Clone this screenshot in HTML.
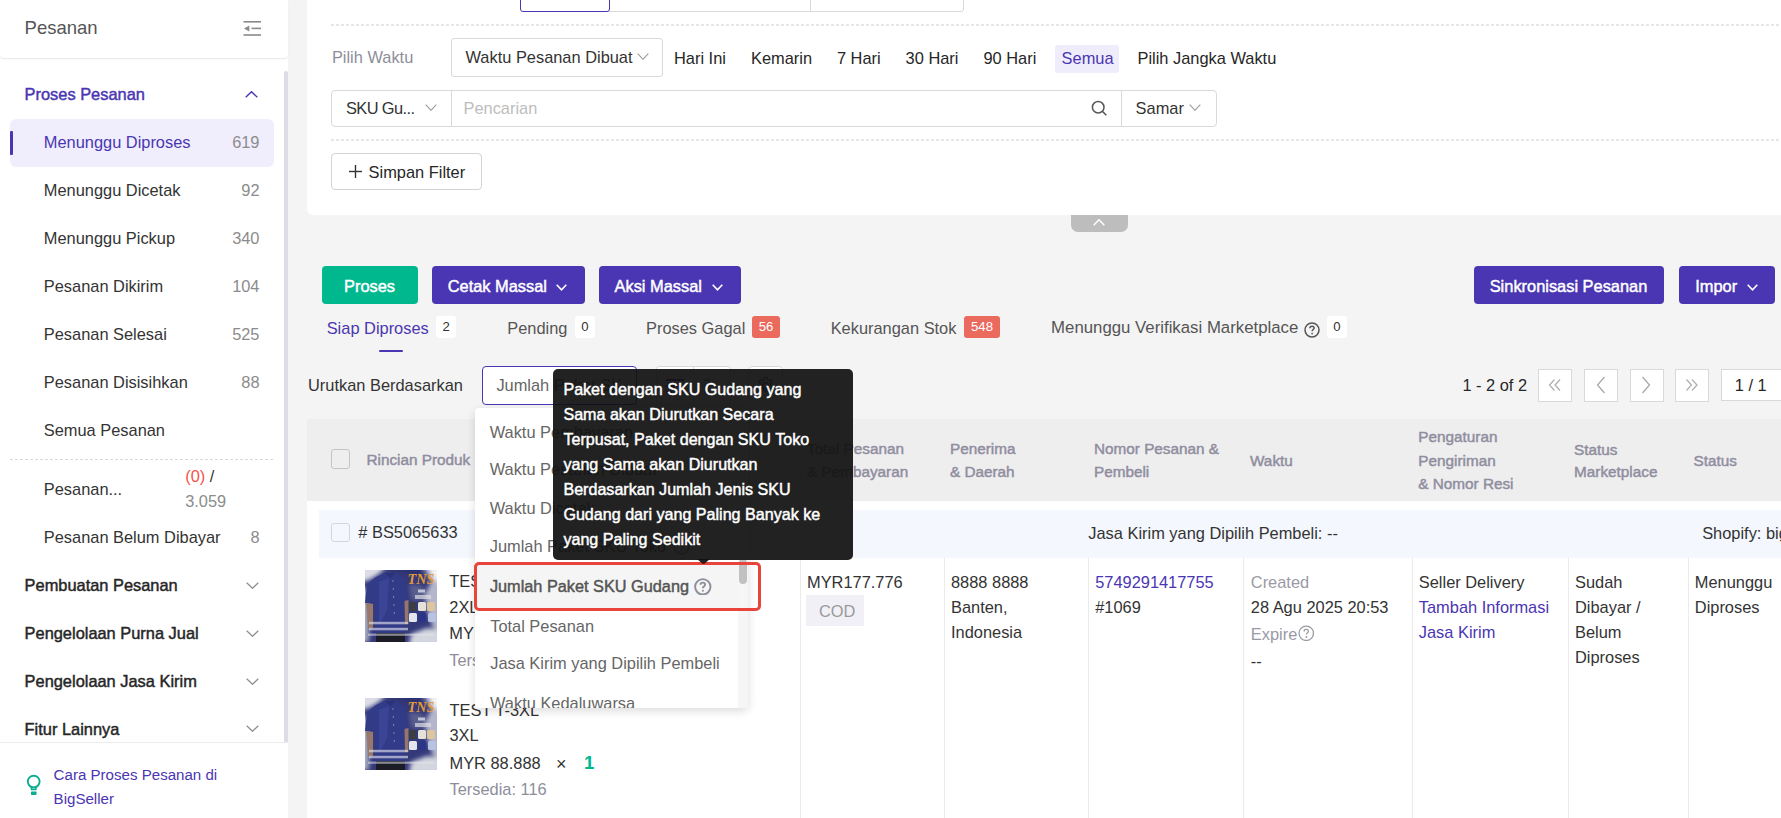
<!DOCTYPE html>
<html><head><meta charset="utf-8"><style>
html,body{margin:0;padding:0;width:1781px;height:818px;overflow:hidden;font-family:"Liberation Sans", sans-serif;}
body{position:relative;}
</style></head><body>
<div style="position:absolute;left:0px;top:0px;width:1781px;height:818px;background:#f4f4f4"></div>
<div style="position:absolute;left:0px;top:0px;width:288px;height:818px;background:#fff"></div>
<div style="position:absolute;left:0px;top:0px;width:288px;height:58px;background:#fff;border-bottom:1px solid #ececec;border-radius:0 0 4px 4px;box-shadow:0 1px 2px rgba(0,0,0,0.03)"></div>
<div style="position:absolute;left:24.6px;top:19.34px;font-size:18.5px;line-height:1;color:#555;font-weight:400;white-space:nowrap;">Pesanan</div>
<svg style="position:absolute;left:243px;top:20px" width="19" height="17" viewBox="0 0 19 17"><rect x="0.5" y="1" width="17.5" height="1.6" fill="#8a8a8a"/><rect x="8.5" y="7.6" width="9.5" height="1.6" fill="#8a8a8a"/><rect x="0.5" y="14.2" width="17.5" height="1.6" fill="#8a8a8a"/><polygon points="1,8.4 6.3,5.4 6.3,11.4" fill="#8a8a8a"/></svg>
<div style="position:absolute;left:284px;top:71px;width:4px;height:671px;background:#dcdde6;border-radius:2px 2px 0 0"></div>
<div style="position:absolute;left:24.6px;top:86.22px;font-size:16.4px;line-height:1;color:#4a36b2;font-weight:400;white-space:nowrap;-webkit-text-stroke:0.45px #4a36b2;">Proses Pesanan</div>
<svg style="position:absolute;left:245px;top:91px" width="13" height="7" viewBox="0 0 13 7"><polyline points="0.7,6.3 6.5,0.7 12.3,6.3" fill="none" stroke="#4a36b2" stroke-width="1.4"/></svg>
<div style="position:absolute;left:10px;top:119px;width:264px;height:48px;background:#f0eefc;border-radius:6px"></div>
<div style="position:absolute;left:10px;top:131px;width:3px;height:24px;background:#4a36b2;border-radius:1px"></div>
<div style="position:absolute;left:43.8px;top:134.12px;font-size:16.4px;line-height:1;color:#4a36b2;font-weight:400;white-space:nowrap;">Menunggu Diproses</div>
<div style="position:absolute;right:1521.5px;top:134.12px;font-size:16.4px;line-height:1;color:#8c8c8c;font-weight:400;white-space:nowrap;">619</div>
<div style="position:absolute;left:43.8px;top:182.12px;font-size:16.4px;line-height:1;color:#333;font-weight:400;white-space:nowrap;">Menunggu Dicetak</div>
<div style="position:absolute;right:1521.5px;top:182.12px;font-size:16.4px;line-height:1;color:#8c8c8c;font-weight:400;white-space:nowrap;">92</div>
<div style="position:absolute;left:43.8px;top:230.12px;font-size:16.4px;line-height:1;color:#333;font-weight:400;white-space:nowrap;">Menunggu Pickup</div>
<div style="position:absolute;right:1521.5px;top:230.12px;font-size:16.4px;line-height:1;color:#8c8c8c;font-weight:400;white-space:nowrap;">340</div>
<div style="position:absolute;left:43.8px;top:278.12px;font-size:16.4px;line-height:1;color:#333;font-weight:400;white-space:nowrap;">Pesanan Dikirim</div>
<div style="position:absolute;right:1521.5px;top:278.12px;font-size:16.4px;line-height:1;color:#8c8c8c;font-weight:400;white-space:nowrap;">104</div>
<div style="position:absolute;left:43.8px;top:326.12px;font-size:16.4px;line-height:1;color:#333;font-weight:400;white-space:nowrap;">Pesanan Selesai</div>
<div style="position:absolute;right:1521.5px;top:326.12px;font-size:16.4px;line-height:1;color:#8c8c8c;font-weight:400;white-space:nowrap;">525</div>
<div style="position:absolute;left:43.8px;top:374.12px;font-size:16.4px;line-height:1;color:#333;font-weight:400;white-space:nowrap;">Pesanan Disisihkan</div>
<div style="position:absolute;right:1521.5px;top:374.12px;font-size:16.4px;line-height:1;color:#8c8c8c;font-weight:400;white-space:nowrap;">88</div>
<div style="position:absolute;left:43.8px;top:422.12px;font-size:16.4px;line-height:1;color:#333;font-weight:400;white-space:nowrap;">Semua Pesanan</div>
<div style="position:absolute;left:10px;top:459px;width:263px;height:0px;border-top:1px dashed #d9d9d9"></div>
<div style="position:absolute;left:43.8px;top:480.82px;font-size:16.4px;line-height:1;color:#333;font-weight:400;white-space:nowrap;">Pesanan...</div>
<div style="position:absolute;left:185.2px;top:467.92px;font-size:16.4px;line-height:1;color:#333;font-weight:400;white-space:nowrap;"><span style="color:#f5524a">(0)</span> /</div>
<div style="position:absolute;left:185.2px;top:492.52px;font-size:16.4px;line-height:1;color:#8c8c8c;font-weight:400;white-space:nowrap;">3.059</div>
<div style="position:absolute;left:43.8px;top:528.52px;font-size:16.4px;line-height:1;color:#333;font-weight:400;white-space:nowrap;">Pesanan Belum Dibayar</div>
<div style="position:absolute;right:1521.5px;top:528.52px;font-size:16.4px;line-height:1;color:#8c8c8c;font-weight:400;white-space:nowrap;">8</div>
<div style="position:absolute;left:24.6px;top:577.02px;font-size:16.4px;line-height:1;color:#262626;font-weight:400;white-space:nowrap;-webkit-text-stroke:0.45px #262626;">Pembuatan Pesanan</div>
<svg style="position:absolute;left:245.5px;top:581.9px" width="13" height="7" viewBox="0 0 13 7"><polyline points="0.7,0.7 6.5,6.3 12.3,0.7" fill="none" stroke="#8c8c8c" stroke-width="1.2"/></svg>
<div style="position:absolute;left:24.6px;top:625.02px;font-size:16.4px;line-height:1;color:#262626;font-weight:400;white-space:nowrap;-webkit-text-stroke:0.45px #262626;">Pengelolaan Purna Jual</div>
<svg style="position:absolute;left:245.5px;top:629.9px" width="13" height="7" viewBox="0 0 13 7"><polyline points="0.7,0.7 6.5,6.3 12.3,0.7" fill="none" stroke="#8c8c8c" stroke-width="1.2"/></svg>
<div style="position:absolute;left:24.6px;top:673.22px;font-size:16.4px;line-height:1;color:#262626;font-weight:400;white-space:nowrap;-webkit-text-stroke:0.45px #262626;">Pengelolaan Jasa Kirim</div>
<svg style="position:absolute;left:245.5px;top:678.1px" width="13" height="7" viewBox="0 0 13 7"><polyline points="0.7,0.7 6.5,6.3 12.3,0.7" fill="none" stroke="#8c8c8c" stroke-width="1.2"/></svg>
<div style="position:absolute;left:24.6px;top:720.52px;font-size:16.4px;line-height:1;color:#262626;font-weight:400;white-space:nowrap;-webkit-text-stroke:0.45px #262626;">Fitur Lainnya</div>
<svg style="position:absolute;left:245.5px;top:725.4px" width="13" height="7" viewBox="0 0 13 7"><polyline points="0.7,0.7 6.5,6.3 12.3,0.7" fill="none" stroke="#8c8c8c" stroke-width="1.2"/></svg>
<div style="position:absolute;left:0px;top:742px;width:288px;height:76px;background:#fff;border-top:1px solid #ececec"></div>
<svg style="position:absolute;left:25px;top:774px" width="17" height="23" viewBox="0 0 17 23"><circle cx="8.7" cy="7.6" r="5.9" fill="none" stroke="#0aae8e" stroke-width="1.9"/><path d="M6.3 12.6 L6.6 15.5 L10.8 15.5 L11.1 12.6" fill="none" stroke="#0aae8e" stroke-width="1.6"/><rect x="6" y="17.6" width="5.5" height="3.3" rx="0.6" fill="#0aae8e"/></svg>
<div style="position:absolute;left:53.6px;top:767.12px;font-size:15.1px;line-height:1;color:#4a36b2;font-weight:400;white-space:nowrap;">Cara Proses Pesanan di</div>
<div style="position:absolute;left:53.6px;top:790.72px;font-size:15.1px;line-height:1;color:#4a36b2;font-weight:400;white-space:nowrap;">BigSeller</div>
<div style="position:absolute;left:307px;top:0px;width:1490px;height:215px;background:#fff;border-radius:0 0 6px 6px"></div>
<div style="position:absolute;left:600px;top:-10px;width:364px;height:22px;border:1px solid #d9d9d9;border-radius:0 0 3px 3px;box-sizing:border-box"></div>
<div style="position:absolute;left:810px;top:-10px;width:1px;height:22px;background:#d9d9d9"></div>
<div style="position:absolute;left:520px;top:-10px;width:90px;height:22px;border:1.5px solid #4a36b2;border-radius:0 0 3px 3px;box-sizing:border-box;background:#fff"></div>
<div style="position:absolute;left:331px;top:24px;width:1450px;height:1.6px;background:repeating-linear-gradient(90deg,#e6e6e6 0 3px,transparent 3px 5px)"></div>
<div style="position:absolute;left:331.9px;top:49.42px;font-size:16.4px;line-height:1;color:#8e8e9a;font-weight:400;white-space:nowrap;">Pilih Waktu</div>
<div style="position:absolute;left:450.5px;top:38.4px;width:212.5px;height:38.5px;border:1px solid #d9d9d9;border-radius:3px;box-sizing:border-box"></div>
<div style="position:absolute;left:465.5px;top:49.42px;font-size:16.4px;line-height:1;color:#333;font-weight:400;white-space:nowrap;">Waktu Pesanan Dibuat</div>
<svg style="position:absolute;left:636.5px;top:53px" width="12" height="7" viewBox="0 0 12 7"><polyline points="0.7,0.7 6.0,6.3 11.3,0.7" fill="none" stroke="#9a9a9a" stroke-width="1.1"/></svg>
<div style="position:absolute;left:674px;top:50.22px;font-size:16.4px;line-height:1;color:#262626;font-weight:400;white-space:nowrap;">Hari Ini</div>
<div style="position:absolute;left:751px;top:50.22px;font-size:16.4px;line-height:1;color:#262626;font-weight:400;white-space:nowrap;">Kemarin</div>
<div style="position:absolute;left:836.9px;top:50.22px;font-size:16.4px;line-height:1;color:#262626;font-weight:400;white-space:nowrap;">7 Hari</div>
<div style="position:absolute;left:905.6px;top:50.22px;font-size:16.4px;line-height:1;color:#262626;font-weight:400;white-space:nowrap;">30 Hari</div>
<div style="position:absolute;left:983.5px;top:50.22px;font-size:16.4px;line-height:1;color:#262626;font-weight:400;white-space:nowrap;">90 Hari</div>
<div style="position:absolute;left:1055px;top:45px;width:64px;height:28px;background:#efecfb;border-radius:3px"></div>
<div style="position:absolute;left:1061.6px;top:50.22px;font-size:16.4px;line-height:1;color:#4a36b2;font-weight:400;white-space:nowrap;">Semua</div>
<div style="position:absolute;left:1137.5px;top:50.22px;font-size:16.4px;line-height:1;color:#262626;font-weight:400;white-space:nowrap;">Pilih Jangka Waktu</div>
<div style="position:absolute;left:331.4px;top:89.5px;width:885.5px;height:37px;border:1px solid #d9d9d9;border-radius:4px;box-sizing:border-box"></div>
<div style="position:absolute;left:450.5px;top:89.5px;width:1px;height:37px;background:#d9d9d9"></div>
<div style="position:absolute;left:1121.3px;top:89.5px;width:1px;height:37px;background:#d9d9d9"></div>
<div style="position:absolute;left:346px;top:100.12px;font-size:16.4px;line-height:1;color:#333;font-weight:400;white-space:nowrap;letter-spacing:-0.6px">SKU Gu...</div>
<svg style="position:absolute;left:424.5px;top:103.5px" width="12" height="7" viewBox="0 0 12 7"><polyline points="0.7,0.7 6.0,6.3 11.3,0.7" fill="none" stroke="#9a9a9a" stroke-width="1.1"/></svg>
<div style="position:absolute;left:463.5px;top:100.12px;font-size:16.4px;line-height:1;color:#bdbdbd;font-weight:400;white-space:nowrap;">Pencarian</div>
<svg style="position:absolute;left:1091px;top:100px" width="17" height="17" viewBox="0 0 17 17"><circle cx="7.2" cy="7.2" r="5.8" fill="none" stroke="#555" stroke-width="1.5"/><line x1="11.3" y1="11.3" x2="15.3" y2="15.3" stroke="#555" stroke-width="1.6"/></svg>
<div style="position:absolute;left:1135.6px;top:100.12px;font-size:16.4px;line-height:1;color:#333;font-weight:400;white-space:nowrap;">Samar</div>
<svg style="position:absolute;left:1189px;top:103.5px" width="12" height="7" viewBox="0 0 12 7"><polyline points="0.7,0.7 6.0,6.3 11.3,0.7" fill="none" stroke="#9a9a9a" stroke-width="1.1"/></svg>
<div style="position:absolute;left:331px;top:139px;width:1450px;height:1.6px;background:repeating-linear-gradient(90deg,#e6e6e6 0 3px,transparent 3px 5px)"></div>
<div style="position:absolute;left:331.4px;top:153.3px;width:150.3px;height:37.2px;border:1px solid #d3d3d3;border-radius:4px;box-sizing:border-box"></div>
<svg style="position:absolute;left:348px;top:164px" width="15" height="15" viewBox="0 0 15 15"><line x1="7.5" y1="1" x2="7.5" y2="14" stroke="#333" stroke-width="1.4"/><line x1="1" y1="7.5" x2="14" y2="7.5" stroke="#333" stroke-width="1.4"/></svg>
<div style="position:absolute;left:368.6px;top:164.12px;font-size:16.4px;line-height:1;color:#262626;font-weight:400;white-space:nowrap;">Simpan Filter</div>
<div style="position:absolute;left:1071px;top:215px;width:57px;height:17px;background:#bdbdbd;border-radius:0 0 7px 7px"></div>
<svg style="position:absolute;left:1093px;top:218.5px" width="12" height="7" viewBox="0 0 12 7"><polyline points="0.7,6.3 6.0,0.7 11.3,6.3" fill="none" stroke="#fff" stroke-width="1.4"/></svg>
<div style="position:absolute;left:322px;top:266px;width:96px;height:37.5px;background:#00b88e;border-radius:4px;"></div>
<div style="position:absolute;left:344px;top:277.72px;font-size:16.4px;line-height:1;color:#fff;font-weight:400;white-space:nowrap;-webkit-text-stroke:0.45px #fff;">Proses</div>
<div style="position:absolute;left:432px;top:266px;width:153px;height:37.5px;background:#4a36b2;border-radius:4px;"></div>
<div style="position:absolute;left:447.7px;top:277.72px;font-size:16.4px;line-height:1;color:#fff;font-weight:400;white-space:nowrap;-webkit-text-stroke:0.45px #fff;">Cetak Massal</div>
<svg style="position:absolute;left:556px;top:284px" width="11" height="6.5" viewBox="0 0 11 6.5"><polyline points="0.7,0.7 5.5,5.8 10.3,0.7" fill="none" stroke="#fff" stroke-width="1.6"/></svg>
<div style="position:absolute;left:599px;top:266px;width:142px;height:37.5px;background:#4a36b2;border-radius:4px;"></div>
<div style="position:absolute;left:614.5px;top:277.72px;font-size:16.4px;line-height:1;color:#fff;font-weight:400;white-space:nowrap;-webkit-text-stroke:0.45px #fff;">Aksi Massal</div>
<svg style="position:absolute;left:712px;top:284px" width="11" height="6.5" viewBox="0 0 11 6.5"><polyline points="0.7,0.7 5.5,5.8 10.3,0.7" fill="none" stroke="#fff" stroke-width="1.6"/></svg>
<div style="position:absolute;left:1474px;top:266px;width:190px;height:37.5px;background:#4a36b2;border-radius:4px;"></div>
<div style="position:absolute;left:1489.7px;top:277.72px;font-size:16.4px;line-height:1;color:#fff;font-weight:400;white-space:nowrap;-webkit-text-stroke:0.45px #fff;">Sinkronisasi Pesanan</div>
<div style="position:absolute;left:1679px;top:266px;width:96px;height:37.5px;background:#4a36b2;border-radius:4px;"></div>
<div style="position:absolute;left:1695.2px;top:277.72px;font-size:16.4px;line-height:1;color:#fff;font-weight:400;white-space:nowrap;-webkit-text-stroke:0.45px #fff;">Impor</div>
<svg style="position:absolute;left:1746.5px;top:284px" width="11" height="6.5" viewBox="0 0 11 6.5"><polyline points="0.7,0.7 5.5,5.8 10.3,0.7" fill="none" stroke="#fff" stroke-width="1.6"/></svg>
<div style="position:absolute;left:326.7px;top:320.12px;font-size:16.4px;line-height:1;color:#4a36b2;font-weight:400;white-space:nowrap;">Siap Diproses</div>
<div style="position:absolute;left:379px;top:350px;width:24px;height:2.3px;background:#4a36b2;border-radius:1px"></div>
<div style="position:absolute;left:436.3px;top:316px;width:19.5px;height:21.5px;background:#fff;border-radius:3px"></div>
<div style="position:absolute;left:436.3px;top:319.83px;font-size:13.2px;line-height:1;color:#333;font-weight:400;white-space:nowrap;width:19.5px;text-align:center">2</div>
<div style="position:absolute;left:507.3px;top:320.12px;font-size:16.4px;line-height:1;color:#555;font-weight:400;white-space:nowrap;">Pending</div>
<div style="position:absolute;left:575px;top:316px;width:19.7px;height:21.5px;background:#fff;border-radius:3px"></div>
<div style="position:absolute;left:575px;top:319.83px;font-size:13.2px;line-height:1;color:#333;font-weight:400;white-space:nowrap;width:19.7px;text-align:center">0</div>
<div style="position:absolute;left:646px;top:320.12px;font-size:16.4px;line-height:1;color:#555;font-weight:400;white-space:nowrap;">Proses Gagal</div>
<div style="position:absolute;left:752px;top:316px;width:28px;height:21.5px;background:#eb6a5e;border-radius:3px"></div>
<div style="position:absolute;left:752px;top:319.83px;font-size:13.2px;line-height:1;color:#fff;font-weight:400;white-space:nowrap;width:28px;text-align:center">56</div>
<div style="position:absolute;left:830.7px;top:320.12px;font-size:16.4px;line-height:1;color:#555;font-weight:400;white-space:nowrap;">Kekurangan Stok</div>
<div style="position:absolute;left:964px;top:316px;width:36px;height:21.5px;background:#eb6a5e;border-radius:3px"></div>
<div style="position:absolute;left:964px;top:319.83px;font-size:13.2px;line-height:1;color:#fff;font-weight:400;white-space:nowrap;width:36px;text-align:center">548</div>
<div style="position:absolute;left:1051.1px;top:319.78px;font-size:16.8px;line-height:1;color:#555;font-weight:400;white-space:nowrap;">Menunggu Verifikasi Marketplace</div>
<svg style="position:absolute;left:1303.5px;top:321.5px" width="16" height="16" viewBox="0 0 16 16"><circle cx="8" cy="8" r="7" fill="none" stroke="#555" stroke-width="1.5"/><path d="M5.9 6.2 C5.9 4.9 6.9 4.2 8 4.2 C9.2 4.2 10.1 5 10.1 6.1 C10.1 7.4 8.1 7.6 8.1 9.3" fill="none" stroke="#555" stroke-width="1.5"/><circle cx="8.1" cy="11.6" r="0.9" fill="#555"/></svg>
<div style="position:absolute;left:1327px;top:316px;width:19.7px;height:21.5px;background:#fff;border-radius:3px"></div>
<div style="position:absolute;left:1327px;top:319.83px;font-size:13.2px;line-height:1;color:#333;font-weight:400;white-space:nowrap;width:19.7px;text-align:center">0</div>
<div style="position:absolute;left:308px;top:376.92px;font-size:16.4px;line-height:1;color:#333;font-weight:400;white-space:nowrap;">Urutkan Berdasarkan</div>
<div style="position:absolute;left:482.2px;top:366.2px;width:155px;height:38.4px;border:1px solid #4a36b2;border-radius:4px;box-sizing:border-box;background:#fff"></div>
<div style="position:absolute;left:496.4px;top:376.92px;font-size:16.4px;line-height:1;color:#666;font-weight:400;white-space:nowrap;width:126px;overflow:hidden">Jumlah Paket SKU Gudang</div>
<div style="position:absolute;left:656.4px;top:366.3px;width:75px;height:37.7px;border:1px solid #d9d9d9;border-radius:3px;box-sizing:border-box;background:#fff"></div>
<div style="position:absolute;left:693.3px;top:366.3px;width:1px;height:37.7px;background:#d9d9d9"></div>
<div style="position:absolute;left:748px;top:366.3px;width:35.4px;height:37.7px;border:1px solid #d9d9d9;border-radius:4px;box-sizing:border-box;background:#fff"></div>
<div style="position:absolute;left:666px;top:379px;width:18px;height:1.8px;background:#4a36b2"></div>
<div style="position:absolute;left:666px;top:385px;width:12px;height:1.8px;background:#4a36b2"></div>
<div style="position:absolute;left:666px;top:391px;width:6px;height:1.8px;background:#4a36b2"></div>
<div style="position:absolute;left:704px;top:379px;width:6px;height:1.8px;background:#888"></div>
<div style="position:absolute;left:704px;top:385px;width:6px;height:1.8px;background:#888"></div>
<div style="position:absolute;left:704px;top:391px;width:6px;height:1.8px;background:#888"></div>
<svg style="position:absolute;left:756px;top:376px" width="19" height="19" viewBox="0 0 24 24"><path d="M12 8.5a3.5 3.5 0 1 0 0 7a3.5 3.5 0 1 0 0-7z M10.3 2h3.4l.5 2.6a7.6 7.6 0 0 1 1.9 1.1l2.5-.9 1.7 2.9-2 1.7a7.6 7.6 0 0 1 0 2.2l2 1.7-1.7 2.9-2.5-.9a7.6 7.6 0 0 1-1.9 1.1l-.5 2.6h-3.4l-.5-2.6a7.6 7.6 0 0 1-1.9-1.1l-2.5.9-1.7-2.9 2-1.7a7.6 7.6 0 0 1 0-2.2l-2-1.7 1.7-2.9 2.5.9a7.6 7.6 0 0 1 1.9-1.1z" fill="none" stroke="#666" stroke-width="1.6"/></svg>
<div style="position:absolute;left:1462.4px;top:377.12px;font-size:16.4px;line-height:1;color:#262626;font-weight:400;white-space:nowrap;">1 - 2 of 2</div>
<div style="position:absolute;left:1538.2px;top:369.2px;width:33.5px;height:32.6px;border:1px solid #d9d9d9;box-sizing:border-box;background:#fff"></div>
<div style="position:absolute;left:1584.2px;top:369.2px;width:33.5px;height:32.6px;border:1px solid #d9d9d9;box-sizing:border-box;background:#fff"></div>
<div style="position:absolute;left:1630.1px;top:369.2px;width:33.5px;height:32.6px;border:1px solid #d9d9d9;box-sizing:border-box;background:#fff"></div>
<div style="position:absolute;left:1675.1px;top:369.2px;width:33.5px;height:32.6px;border:1px solid #d9d9d9;box-sizing:border-box;background:#fff"></div>
<svg style="position:absolute;left:1548px;top:378px" width="14" height="14" viewBox="0 0 14 14"><polyline points="6.5,1.5 1.5,7 6.5,12.5" fill="none" stroke="#b0b0b0" stroke-width="1.3"/><polyline points="12,1.5 7,7 12,12.5" fill="none" stroke="#b0b0b0" stroke-width="1.3"/></svg>
<svg style="position:absolute;left:1594px;top:375px" width="14" height="20" viewBox="0 0 14 20"><polyline points="10.5,2 3.5,10 10.5,18" fill="none" stroke="#a9a9a9" stroke-width="1.3"/></svg>
<svg style="position:absolute;left:1639px;top:375px" width="14" height="20" viewBox="0 0 14 20"><polyline points="3.5,2 10.5,10 3.5,18" fill="none" stroke="#a9a9a9" stroke-width="1.3"/></svg>
<svg style="position:absolute;left:1685px;top:378px" width="14" height="14" viewBox="0 0 14 14"><polyline points="1.5,1.5 6.5,7 1.5,12.5" fill="none" stroke="#b0b0b0" stroke-width="1.3"/><polyline points="7,1.5 12,7 7,12.5" fill="none" stroke="#b0b0b0" stroke-width="1.3"/></svg>
<div style="position:absolute;left:1721px;top:369.2px;width:70px;height:32.3px;border:1px solid #d9d9d9;box-sizing:border-box;background:#fff"></div>
<div style="position:absolute;left:1734.8px;top:377.12px;font-size:16.4px;line-height:1;color:#262626;font-weight:400;white-space:nowrap;">1 / 1</div>
<div style="position:absolute;left:307px;top:419px;width:1474px;height:399px;background:#fff"></div>
<div style="position:absolute;left:307px;top:419px;width:1474px;height:81.6px;background:#eeeeee"></div>
<div style="position:absolute;left:331px;top:449.2px;width:19px;height:19.5px;border:1.5px solid #c4c4c4;border-radius:3px;box-sizing:border-box"></div>
<div style="position:absolute;left:366.5px;top:452.25px;font-size:15.3px;line-height:1;color:#8f8d9e;font-weight:400;white-space:nowrap;-webkit-text-stroke:0.45px #8f8d9e;">Rincian Produk</div>
<div style="position:absolute;left:807px;top:441.05px;font-size:15.3px;line-height:1;color:#8f8d9e;font-weight:400;white-space:nowrap;-webkit-text-stroke:0.45px #8f8d9e;">Total Pesanan</div>
<div style="position:absolute;left:807px;top:464.05px;font-size:15.3px;line-height:1;color:#8f8d9e;font-weight:400;white-space:nowrap;-webkit-text-stroke:0.45px #8f8d9e;">&amp; Pembayaran</div>
<div style="position:absolute;left:950px;top:441.05px;font-size:15.3px;line-height:1;color:#8f8d9e;font-weight:400;white-space:nowrap;-webkit-text-stroke:0.45px #8f8d9e;">Penerima</div>
<div style="position:absolute;left:950px;top:464.05px;font-size:15.3px;line-height:1;color:#8f8d9e;font-weight:400;white-space:nowrap;-webkit-text-stroke:0.45px #8f8d9e;">&amp; Daerah</div>
<div style="position:absolute;left:1094px;top:441.05px;font-size:15.3px;line-height:1;color:#8f8d9e;font-weight:400;white-space:nowrap;-webkit-text-stroke:0.45px #8f8d9e;">Nomor Pesanan &amp;</div>
<div style="position:absolute;left:1094px;top:464.05px;font-size:15.3px;line-height:1;color:#8f8d9e;font-weight:400;white-space:nowrap;-webkit-text-stroke:0.45px #8f8d9e;">Pembeli</div>
<div style="position:absolute;left:1250px;top:453.05px;font-size:15.3px;line-height:1;color:#8f8d9e;font-weight:400;white-space:nowrap;-webkit-text-stroke:0.45px #8f8d9e;">Waktu</div>
<div style="position:absolute;left:1418.3px;top:429.35px;font-size:15.3px;line-height:1;color:#8f8d9e;font-weight:400;white-space:nowrap;-webkit-text-stroke:0.45px #8f8d9e;">Pengaturan</div>
<div style="position:absolute;left:1418.3px;top:453.05px;font-size:15.3px;line-height:1;color:#8f8d9e;font-weight:400;white-space:nowrap;-webkit-text-stroke:0.45px #8f8d9e;">Pengiriman</div>
<div style="position:absolute;left:1418.3px;top:475.85px;font-size:15.3px;line-height:1;color:#8f8d9e;font-weight:400;white-space:nowrap;-webkit-text-stroke:0.45px #8f8d9e;">&amp; Nomor Resi</div>
<div style="position:absolute;left:1574.1px;top:441.55px;font-size:15.3px;line-height:1;color:#8f8d9e;font-weight:400;white-space:nowrap;-webkit-text-stroke:0.45px #8f8d9e;">Status</div>
<div style="position:absolute;left:1574.1px;top:464.35px;font-size:15.3px;line-height:1;color:#8f8d9e;font-weight:400;white-space:nowrap;-webkit-text-stroke:0.45px #8f8d9e;">Marketplace</div>
<div style="position:absolute;left:1693.5px;top:453.05px;font-size:15.3px;line-height:1;color:#8f8d9e;font-weight:400;white-space:nowrap;-webkit-text-stroke:0.45px #8f8d9e;">Status</div>
<div style="position:absolute;left:319px;top:510px;width:1462px;height:47.7px;background:#f4f7fe"></div>
<div style="position:absolute;left:331px;top:523.2px;width:19px;height:18.4px;border:1.5px solid #d6d6d6;border-radius:3px;box-sizing:border-box"></div>
<div style="position:absolute;left:358.3px;top:524.32px;font-size:16.4px;line-height:1;color:#333;font-weight:400;white-space:nowrap;"># BS5065633</div>
<div style="position:absolute;left:1088.3px;top:524.82px;font-size:16.4px;line-height:1;color:#333;font-weight:400;white-space:nowrap;">Jasa Kirim yang Dipilih Pembeli: --</div>
<div style="position:absolute;left:1702.2px;top:525.02px;font-size:16.4px;line-height:1;color:#333;font-weight:400;white-space:nowrap;">Shopify: bigseller</div>
<div style="position:absolute;left:799.5px;top:557.7px;width:1px;height:261px;background:#ebebeb"></div>
<div style="position:absolute;left:943.6px;top:557.7px;width:1px;height:261px;background:#ebebeb"></div>
<div style="position:absolute;left:1087.6px;top:557.7px;width:1px;height:261px;background:#ebebeb"></div>
<div style="position:absolute;left:1243.4px;top:557.7px;width:1px;height:261px;background:#ebebeb"></div>
<div style="position:absolute;left:1411.5px;top:557.7px;width:1px;height:261px;background:#ebebeb"></div>
<div style="position:absolute;left:1567.5px;top:557.7px;width:1px;height:261px;background:#ebebeb"></div>
<div style="position:absolute;left:1687.5px;top:557.7px;width:1px;height:261px;background:#ebebeb"></div>
<svg style="position:absolute;left:365px;top:570px" width="72" height="72" viewBox="0 0 72 72">
<defs><filter id="bl570" x="-20%" y="-20%" width="140%" height="140%"><feGaussianBlur stdDeviation="2"/></filter>
<filter id="bs570" x="-10%" y="-10%" width="120%" height="120%"><feGaussianBlur stdDeviation="0.45"/></filter>
<clipPath id="cp570"><rect width="72" height="72"/></clipPath></defs>
<g clip-path="url(#cp570)">
<rect width="72" height="72" fill="#34397a"/>
<g filter="url(#bl570)">
<path d="M-4 -4 L22 -4 L14 4 L4 10 L-4 12 Z" fill="#dcdde6"/>
<path d="M-4 16 L5 20 L4 72 L-4 72 Z" fill="#a9adc2"/>
<path d="M58 -4 L76 -4 L76 62 L68 58 L62 40 L60 24 L66 12 Z" fill="#b4b7cb"/>
<path d="M64 -4 L76 -4 L76 14 L68 8 Z" fill="#f4f4f8"/>
<path d="M46 64 L62 58 L76 60 L76 76 L44 76 Z" fill="#d3d5df"/>
<path d="M24 -4 L58 -4 L54 6 L40 4 Z" fill="#2c3170"/>
<path d="M44 14 L58 16 L60 30 L46 30 Z" fill="#595e8e"/>
</g>
<g filter="url(#bs570)">
<path d="M11 7 L20 3 L30 3 L38 8 L44 30 L39 32 L40 64 L10 64 L10 34 L0 33 L2 14 Z" fill="#333b88"/>
<path d="M20 3 L30 3 L26 8 Z" fill="#2a3278"/>
<path d="M14 12 L24 8 L22 40 L14 56 Z" fill="#3f489c" opacity="0.7"/>
<path d="M1 33 L8 34 L8 58 L3 58 Z" fill="#98786c"/>
<path d="M39.5 31 L43.5 30 L43.5 54 L40 54 Z" fill="#96766a"/>
<rect x="11" y="63" width="29" height="10" fill="#1c1c26"/>
<circle cx="28" cy="11" r="0.7" fill="#9aa0c8"/><circle cx="28.3" cy="19" r="0.7" fill="#9aa0c8"/><circle cx="28.6" cy="27" r="0.7" fill="#9aa0c8"/><circle cx="29" cy="35" r="0.7" fill="#9aa0c8"/><circle cx="29.3" cy="43" r="0.7" fill="#9aa0c8"/>
</g>
<text x="42.5" y="14.2" font-family="Liberation Serif" font-style="italic" font-weight="bold" font-size="14" fill="#e39a32" textLength="27" lengthAdjust="spacingAndGlyphs">TNS</text>
<g filter="url(#bs570)">
<rect x="53" y="19.5" width="7" height="3" fill="#dcdde6" opacity="0.8"/>
<rect x="50" y="25" width="16" height="4" fill="#dcdde6" opacity="0.7"/>
<rect x="44" y="32" width="7" height="9" rx="1.5" fill="#3a3c44"/><rect x="53" y="32" width="8" height="9" rx="1.5" fill="#e6e2da"/><rect x="62" y="32" width="8" height="9" rx="1.5" fill="#dcc69c"/>
<rect x="44" y="43" width="8" height="9" rx="1.5" fill="#e2e6ee"/><rect x="54" y="43" width="7" height="9" rx="1.5" fill="#2c3488"/><rect x="63" y="43" width="8" height="9" rx="1.5" fill="#b7c3e2"/>
<rect x="4" y="51.8" width="39" height="2.5" fill="#e6e6ee" opacity="0.62"/>
<rect x="4" y="57.8" width="39" height="2.5" fill="#e6e6ee" opacity="0.62"/>
<rect x="3" y="63.6" width="66" height="2.2" fill="#e4e4ea" opacity="0.55"/>
</g>
</g>
</svg>
<div style="position:absolute;left:449.3px;top:573.32px;font-size:16.4px;line-height:1;color:#333;font-weight:400;white-space:nowrap;">TEST T-2XL</div>
<div style="position:absolute;left:449.3px;top:599.02px;font-size:16.4px;line-height:1;color:#333;font-weight:400;white-space:nowrap;">2XL</div>
<div style="position:absolute;left:449.3px;top:625.32px;font-size:16.4px;line-height:1;color:#333;font-weight:400;white-space:nowrap;">MYR 88.888</div>
<div style="position:absolute;left:449.3px;top:652.12px;font-size:16.4px;line-height:1;color:#8e8e9a;font-weight:400;white-space:nowrap;">Tersedia: 116</div>
<svg style="position:absolute;left:365px;top:698px" width="72" height="72" viewBox="0 0 72 72">
<defs><filter id="bl698" x="-20%" y="-20%" width="140%" height="140%"><feGaussianBlur stdDeviation="2"/></filter>
<filter id="bs698" x="-10%" y="-10%" width="120%" height="120%"><feGaussianBlur stdDeviation="0.45"/></filter>
<clipPath id="cp698"><rect width="72" height="72"/></clipPath></defs>
<g clip-path="url(#cp698)">
<rect width="72" height="72" fill="#34397a"/>
<g filter="url(#bl698)">
<path d="M-4 -4 L22 -4 L14 4 L4 10 L-4 12 Z" fill="#dcdde6"/>
<path d="M-4 16 L5 20 L4 72 L-4 72 Z" fill="#a9adc2"/>
<path d="M58 -4 L76 -4 L76 62 L68 58 L62 40 L60 24 L66 12 Z" fill="#b4b7cb"/>
<path d="M64 -4 L76 -4 L76 14 L68 8 Z" fill="#f4f4f8"/>
<path d="M46 64 L62 58 L76 60 L76 76 L44 76 Z" fill="#d3d5df"/>
<path d="M24 -4 L58 -4 L54 6 L40 4 Z" fill="#2c3170"/>
<path d="M44 14 L58 16 L60 30 L46 30 Z" fill="#595e8e"/>
</g>
<g filter="url(#bs698)">
<path d="M11 7 L20 3 L30 3 L38 8 L44 30 L39 32 L40 64 L10 64 L10 34 L0 33 L2 14 Z" fill="#333b88"/>
<path d="M20 3 L30 3 L26 8 Z" fill="#2a3278"/>
<path d="M14 12 L24 8 L22 40 L14 56 Z" fill="#3f489c" opacity="0.7"/>
<path d="M1 33 L8 34 L8 58 L3 58 Z" fill="#98786c"/>
<path d="M39.5 31 L43.5 30 L43.5 54 L40 54 Z" fill="#96766a"/>
<rect x="11" y="63" width="29" height="10" fill="#1c1c26"/>
<circle cx="28" cy="11" r="0.7" fill="#9aa0c8"/><circle cx="28.3" cy="19" r="0.7" fill="#9aa0c8"/><circle cx="28.6" cy="27" r="0.7" fill="#9aa0c8"/><circle cx="29" cy="35" r="0.7" fill="#9aa0c8"/><circle cx="29.3" cy="43" r="0.7" fill="#9aa0c8"/>
</g>
<text x="42.5" y="14.2" font-family="Liberation Serif" font-style="italic" font-weight="bold" font-size="14" fill="#e39a32" textLength="27" lengthAdjust="spacingAndGlyphs">TNS</text>
<g filter="url(#bs698)">
<rect x="53" y="19.5" width="7" height="3" fill="#dcdde6" opacity="0.8"/>
<rect x="50" y="25" width="16" height="4" fill="#dcdde6" opacity="0.7"/>
<rect x="44" y="32" width="7" height="9" rx="1.5" fill="#3a3c44"/><rect x="53" y="32" width="8" height="9" rx="1.5" fill="#e6e2da"/><rect x="62" y="32" width="8" height="9" rx="1.5" fill="#dcc69c"/>
<rect x="44" y="43" width="8" height="9" rx="1.5" fill="#e2e6ee"/><rect x="54" y="43" width="7" height="9" rx="1.5" fill="#2c3488"/><rect x="63" y="43" width="8" height="9" rx="1.5" fill="#b7c3e2"/>
<rect x="4" y="51.8" width="39" height="2.5" fill="#e6e6ee" opacity="0.62"/>
<rect x="4" y="57.8" width="39" height="2.5" fill="#e6e6ee" opacity="0.62"/>
<rect x="3" y="63.6" width="66" height="2.2" fill="#e4e4ea" opacity="0.55"/>
</g>
</g>
</svg>
<div style="position:absolute;left:449.5px;top:702.22px;font-size:16.4px;line-height:1;color:#333;font-weight:400;white-space:nowrap;">TEST T-3XL</div>
<div style="position:absolute;left:449.5px;top:726.72px;font-size:16.4px;line-height:1;color:#333;font-weight:400;white-space:nowrap;">3XL</div>
<div style="position:absolute;left:449.5px;top:754.62px;font-size:16.4px;line-height:1;color:#333;font-weight:400;white-space:nowrap;">MYR 88.888</div>
<div style="position:absolute;left:556px;top:754.76px;font-size:18px;line-height:1;color:#333;font-weight:400;white-space:nowrap;">×</div>
<div style="position:absolute;left:584px;top:753.54px;font-size:18.5px;line-height:1;color:#00b88e;font-weight:700;white-space:nowrap;">1</div>
<div style="position:absolute;left:449.5px;top:780.62px;font-size:16.4px;line-height:1;color:#8e8e9a;font-weight:400;white-space:nowrap;">Tersedia: 116</div>
<div style="position:absolute;left:807px;top:573.72px;font-size:16.4px;line-height:1;color:#333;font-weight:400;white-space:nowrap;">MYR177.776</div>
<div style="position:absolute;left:806px;top:595px;width:57.7px;height:31px;background:#f1f0f7"></div>
<div style="position:absolute;left:819px;top:603.12px;font-size:16.4px;line-height:1;color:#9a9a9a;font-weight:400;white-space:nowrap;">COD</div>
<div style="position:absolute;left:951px;top:573.72px;font-size:16.4px;line-height:1;color:#333;font-weight:400;white-space:nowrap;">8888 8888</div>
<div style="position:absolute;left:951px;top:599.42px;font-size:16.4px;line-height:1;color:#333;font-weight:400;white-space:nowrap;">Banten,</div>
<div style="position:absolute;left:951px;top:623.62px;font-size:16.4px;line-height:1;color:#333;font-weight:400;white-space:nowrap;">Indonesia</div>
<div style="position:absolute;left:1095.2px;top:574.12px;font-size:16.4px;line-height:1;color:#4a36b2;font-weight:400;white-space:nowrap;">5749291417755</div>
<div style="position:absolute;left:1095.2px;top:598.62px;font-size:16.4px;line-height:1;color:#333;font-weight:400;white-space:nowrap;">#1069</div>
<div style="position:absolute;left:1250.8px;top:574.12px;font-size:16.4px;line-height:1;color:#9a9aa6;font-weight:400;white-space:nowrap;">Created</div>
<div style="position:absolute;left:1250.8px;top:598.62px;font-size:16.4px;line-height:1;color:#333;font-weight:400;white-space:nowrap;">28 Agu 2025 20:53</div>
<div style="position:absolute;left:1250.8px;top:626.02px;font-size:16.4px;line-height:1;color:#9a9aa6;font-weight:400;white-space:nowrap;">Expire</div>
<svg style="position:absolute;left:1297.5px;top:624.5px" width="16.5" height="16.5" viewBox="0 0 16 16"><circle cx="8" cy="8" r="7" fill="none" stroke="#9a9aa6" stroke-width="1.2606060606060607"/><path d="M5.9 6.2 C5.9 4.9 6.9 4.2 8 4.2 C9.2 4.2 10.1 5 10.1 6.1 C10.1 7.4 8.1 7.6 8.1 9.3" fill="none" stroke="#9a9aa6" stroke-width="1.2606060606060607"/><circle cx="8.1" cy="11.6" r="0.9" fill="#9a9aa6"/></svg>
<div style="position:absolute;left:1250.8px;top:653.12px;font-size:16.4px;line-height:1;color:#333;font-weight:400;white-space:nowrap;">--</div>
<div style="position:absolute;left:1418.8px;top:574.12px;font-size:16.4px;line-height:1;color:#333;font-weight:400;white-space:nowrap;">Seller Delivery</div>
<div style="position:absolute;left:1418.8px;top:598.82px;font-size:16.4px;line-height:1;color:#4a36b2;font-weight:400;white-space:nowrap;">Tambah Informasi</div>
<div style="position:absolute;left:1418.8px;top:624.02px;font-size:16.4px;line-height:1;color:#4a36b2;font-weight:400;white-space:nowrap;">Jasa Kirim</div>
<div style="position:absolute;left:1575px;top:574.12px;font-size:16.4px;line-height:1;color:#333;font-weight:400;white-space:nowrap;">Sudah</div>
<div style="position:absolute;left:1575px;top:599.12px;font-size:16.4px;line-height:1;color:#333;font-weight:400;white-space:nowrap;">Dibayar /</div>
<div style="position:absolute;left:1575px;top:624.12px;font-size:16.4px;line-height:1;color:#333;font-weight:400;white-space:nowrap;">Belum</div>
<div style="position:absolute;left:1575px;top:649.12px;font-size:16.4px;line-height:1;color:#333;font-weight:400;white-space:nowrap;">Diproses</div>
<div style="position:absolute;left:1694.8px;top:574.12px;font-size:16.4px;line-height:1;color:#333;font-weight:400;white-space:nowrap;">Menunggu</div>
<div style="position:absolute;left:1694.8px;top:598.82px;font-size:16.4px;line-height:1;color:#333;font-weight:400;white-space:nowrap;">Diproses</div>
<div style="position:absolute;left:475px;top:408px;width:273px;height:300px;background:#fff;border-radius:4px;box-shadow:0 3px 10px rgba(0,0,0,0.14);overflow:hidden"></div>
<div style="position:absolute;left:738px;top:408px;width:10px;height:300px;background:#f6f6f6"></div>
<div style="position:absolute;left:739px;top:558.6px;width:7.7px;height:25px;background:#c1c1c1;border-radius:4px"></div>
<div style="position:absolute;left:489.7px;top:423.62px;font-size:16.4px;line-height:1;color:#666;font-weight:400;white-space:nowrap;">Waktu Pembayaran</div>
<div style="position:absolute;left:489.7px;top:461.42px;font-size:16.4px;line-height:1;color:#666;font-weight:400;white-space:nowrap;">Waktu Pesanan Dibuat</div>
<div style="position:absolute;left:489.7px;top:499.52px;font-size:16.4px;line-height:1;color:#666;font-weight:400;white-space:nowrap;">Waktu Dicetak</div>
<div style="position:absolute;left:489.7px;top:537.72px;font-size:16.4px;line-height:1;color:#666;font-weight:400;white-space:nowrap;">Jumlah Paket SKU Toko</div>
<svg style="position:absolute;left:673px;top:538px" width="17" height="17" viewBox="0 0 16 16"><circle cx="8" cy="8" r="7" fill="none" stroke="#8e8e9a" stroke-width="1.3176470588235294"/><path d="M5.9 6.2 C5.9 4.9 6.9 4.2 8 4.2 C9.2 4.2 10.1 5 10.1 6.1 C10.1 7.4 8.1 7.6 8.1 9.3" fill="none" stroke="#8e8e9a" stroke-width="1.3176470588235294"/><circle cx="8.1" cy="11.6" r="0.9" fill="#8e8e9a"/></svg>
<div style="position:absolute;left:476px;top:563px;width:262px;height:47px;background:#f5f5f5"></div>
<div style="position:absolute;left:489.9px;top:577.70px;font-size:16.3px;line-height:1;color:#555;font-weight:400;white-space:nowrap;-webkit-text-stroke:0.45px #555;">Jumlah Paket SKU Gudang</div>
<svg style="position:absolute;left:694.4px;top:577.5px" width="17.6" height="17.6" viewBox="0 0 16 16"><circle cx="8" cy="8" r="7" fill="none" stroke="#8e8e9a" stroke-width="1.727272727272727"/><path d="M5.9 6.2 C5.9 4.9 6.9 4.2 8 4.2 C9.2 4.2 10.1 5 10.1 6.1 C10.1 7.4 8.1 7.6 8.1 9.3" fill="none" stroke="#8e8e9a" stroke-width="1.727272727272727"/><circle cx="8.1" cy="11.6" r="0.9" fill="#8e8e9a"/></svg>
<div style="position:absolute;left:490.2px;top:618.12px;font-size:16.4px;line-height:1;color:#666;font-weight:400;white-space:nowrap;">Total Pesanan</div>
<div style="position:absolute;left:490.2px;top:655.32px;font-size:16.4px;line-height:1;color:#666;font-weight:400;white-space:nowrap;">Jasa Kirim yang Dipilih Pembeli</div>
<div style="position:absolute;left:475px;top:690px;width:263px;height:18px;overflow:hidden"><div style="position:absolute;left:15px;top:4.5px;font-size:16.4px;line-height:1;color:#666;white-space:nowrap">Waktu Kedaluwarsa</div></div>
<div style="position:absolute;left:473.7px;top:561.7px;width:287.7px;height:49.1px;border:3px solid #e8443a;border-radius:5px;box-sizing:border-box"></div>
<div style="position:absolute;left:553px;top:369px;width:300px;height:191px;background:rgba(17,17,17,0.93);border-radius:5px"></div>
<svg style="position:absolute;left:697px;top:559px" width="13" height="5" viewBox="0 0 13 5"><path d="M0 0 L13 0 L8 4.2 Q6.5 5.2 5 4.2 Z" fill="rgba(17,17,17,0.93)"/></svg>
<div style="position:absolute;left:563.4px;top:381.07px;font-size:16.1px;line-height:1;color:#fff;font-weight:400;white-space:nowrap;-webkit-text-stroke:0.45px #fff;">Paket dengan SKU Gudang yang</div>
<div style="position:absolute;left:563.4px;top:406.07px;font-size:16.1px;line-height:1;color:#fff;font-weight:400;white-space:nowrap;-webkit-text-stroke:0.45px #fff;">Sama akan Diurutkan Secara</div>
<div style="position:absolute;left:563.4px;top:431.07px;font-size:16.1px;line-height:1;color:#fff;font-weight:400;white-space:nowrap;-webkit-text-stroke:0.45px #fff;">Terpusat, Paket dengan SKU Toko</div>
<div style="position:absolute;left:563.4px;top:456.07px;font-size:16.1px;line-height:1;color:#fff;font-weight:400;white-space:nowrap;-webkit-text-stroke:0.45px #fff;">yang Sama akan Diurutkan</div>
<div style="position:absolute;left:563.4px;top:481.07px;font-size:16.1px;line-height:1;color:#fff;font-weight:400;white-space:nowrap;-webkit-text-stroke:0.45px #fff;">Berdasarkan Jumlah Jenis SKU</div>
<div style="position:absolute;left:563.4px;top:506.07px;font-size:16.1px;line-height:1;color:#fff;font-weight:400;white-space:nowrap;-webkit-text-stroke:0.45px #fff;">Gudang dari yang Paling Banyak ke</div>
<div style="position:absolute;left:563.4px;top:531.07px;font-size:16.1px;line-height:1;color:#fff;font-weight:400;white-space:nowrap;-webkit-text-stroke:0.45px #fff;">yang Paling Sedikit</div>
</body></html>
